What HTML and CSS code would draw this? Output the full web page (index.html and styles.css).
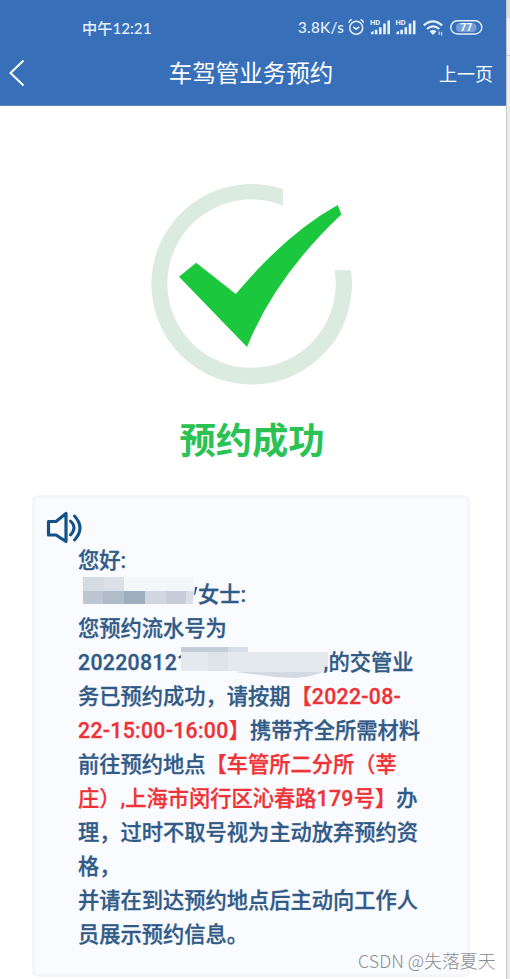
FILE: index.html
```
<!DOCTYPE html>
<html lang="zh-CN">

<head>
  <meta charset="utf-8">
  <meta name="viewport" content="width=device-width, user-scalable=no" />
  <title>车驾管业务预约</title>
  <link rel="stylesheet" href="styles.css">
</head>

<body>
<div class="page">
  <div class="phone">
    <div class="header">
      <div class="status">
        <span class="time">中午12:21</span>
        <span class="speed">3.8K/s</span>
        <svg class="icons" width="138" height="24" viewBox="346 15 138 24" fill="none" stroke="#e6f1ff">
          <!-- alarm -->
          <circle cx="356.2" cy="27.8" r="6.5" stroke-width="1.5" />
          <path d="M348.8 22.8q.8-2.3 3-3.4M363.6 22.8q-.8-2.3-3-3.4M353.2 26.8l3 2.4 3-2.4" stroke-width="1.5" />
          <!-- signal -->
          <g id="signal">
            <path d="M371 34.2v-2.2l2.6-1v3.2zM374.8 34.2v-4.4h2.6v4.4zM379 34.2v-7h2.6v7zM383.2 34.2V23.4h2.6v10.8zM387.4 34.2V20.5h2.6v13.7z" fill="#e6f1ff" stroke="none" />
            <text class="hd" x="370" y="25">HD</text>
          </g>
          <use href="#signal" x="25.5" />
          <!-- wifi -->
          <path d="M423.8 25.4q9-8.2 18.4 0M427 29q6-5.2 12.2 0" stroke-width="2.2" />
          <path d="M429.5 31.3q3.6-2.6 7 0l-3.5 3.6z" fill="#e6f1ff" stroke="none" />
          <path d="M439.2 31.5v3.5M441.6 32v3.5" stroke-width="1" />
          <!-- battery -->
          <rect x="450.8" y="20.8" width="31" height="13.2" rx="6.6" stroke-width="1.4" />
          <path d="M460 23h12.5q4 0 4 4.5t-4 4.5H460q-4 0-4-4.5t4-4.5z" fill="#779fd5" stroke="none" />
          <text class="level" x="466.3" y="31.2">77</text>
        </svg>
      </div>
      <div class="nav">
        <svg class="back" width="16" height="28" viewBox="0 0 16 28" fill="none" stroke="#fff" stroke-width="2">
          <path d="M14.5 1.5L1.5 14l13 12.5" />
        </svg>
        <div class="title">车驾管业务预约</div>
        <div class="prev">上一页</div>
      </div>
    </div>

    <div class="result">
      <svg width="204" height="204" viewBox="150 182 204 204">
        <path fill="#dbebe0" d="M283 189A100.3 100.3 0 1 0 351 270.3H334.7A84.2 84.2 0 1 1 283 205.5z" />
        <path fill="#1bc83d" d="M179 276.8L196.2 262.8L235.8 294Q287 233 337.7 205L341.3 214.5Q275 277 247 347z" />
      </svg>
      <div class="success">预约成功</div>
    </div>

    <div class="notice">
      <svg class="speaker" width="38" height="36" viewBox="0 0 38 36" fill="none" stroke="#155189" stroke-width="3.2">
        <path d="M3.5 11.5H11L21 3.5v28L11 25H3.5z" stroke-linejoin="round" />
        <path d="M25.5 11q7 6.5 0 14M29.5 6q11 12 0 24" stroke-width="3" stroke-linecap="round" />
      </svg>
      <div class="text">
        <div>您好:</div>
        <div class="line"><svg class="mask-name" width="116" height="28" viewBox="78 576 116 28">
          <path fill="#f4f7f9" d="M82 577h111v15H82z" />
          <path fill="#d5dbe3" d="M83 577h21v14H83z" />
          <path fill="#dce1e8" d="M104 577h20v14h-20z" />
          <path fill="#bcc7d3" d="M83 591h20v13H83z" />
          <path fill="#b0bcca" d="M103 591h21v13h-21z" />
          <path fill="#a0afc0" d="M124 591h21v13h-21z" />
          <path fill="#d0d7e0" d="M145 591h21v13h-21z" />
          <path fill="#c6ceda" d="M166 591h20v13h-20z" />
          <path fill="#d9dfe7" d="M186 591h8l-1.5 13H186z" />
        </svg><svg class="slash" width="4" height="12" viewBox="0 0 4 12"><path fill="#315a87" d="M1 0H3.4L1 8H0z" /></svg>女士:</div>
        <div>您预约流水号为</div>
        <div class="line"><b>202208121</b><svg class="mask-no" width="147" height="32" viewBox="181 647 147 32">
          <path fill="#e4e9ed" d="M181 647h67v5h80v15l-6 6-12 3-14 2-20-1-26-4-15-2H181z" />
          <path fill="#c4cdd7" d="M181 647h47v5h-47z" />
          <path fill="#d8dee5" d="M228 647h20v5h-20z" />
          <path fill="#dfe4e9" d="M208 652h20v19h-20z" />
          <path fill="#d3dae2" d="M236 672h86l-12 4-14 2-20-1z" />
        </svg><span class="comma">,</span>的交管业</div>
        <div>务已预约成功，请按期<span class="red">【<b>2022-08-</b></span></div>
        <div><span class="red"><b>22-15:00-16:00</b>】</span>携带齐全所需材料</div>
        <div>前往预约地点<span class="red">【车管所二分所（莘</span></div>
        <div><span class="red">庄）,上海市闵行区沁春路<b>179</b>号】</span>办</div>
        <div>理，过时不取号视为主动放弃预约资</div>
        <div>格，</div>
        <div>并请在到达预约地点后主动向工作人</div>
        <div>员展示预约信息。</div>
      </div>
    </div>
  </div>
  <div class="edge"></div>
</div>
<div class="watermark">CSDN @失落夏天</div>
</body>
</html>
```
FILE: styles.css
```
html, body {
  height: 100%;
}

body {
  margin: 0px;
  background-color: #fff;
  font-family: Roboto, "Noto Sans CJK SC", sans-serif;
  overflow: hidden;
}

.page {
  display: flex;
  height: 979px;
}

.phone {
  width: 506px;
  flex: none;
}

/* strip of the window behind the phone */
.edge {
  flex: 1;
  box-sizing: border-box;
  border-left: 1px solid #c9c9c9;
  background: linear-gradient(#dedfe1 18px, #f1f1f1 18px, #f1f1f1 55px, #c8c8c8 55px, #c8c8c8 56px, #ececec 56px);
}

.header {
  height: 106px;
  box-sizing: border-box;
  background-color: #3770b9;
  border-bottom: 1px solid #5d87bd;
  color: #fff;
}

.status {
  display: flex;
  align-items: center;
  height: 54px;
  padding-left: 82px;
  color: #e6f1ff;
  font-family: Lato, "Noto Sans CJK SC", sans-serif;
  font-size: 15.2px;
  font-weight: 500;
}

.time {
  width: 216px;
}

.speed {
  width: 48px;
  letter-spacing: 0.3px;
}

.hd {
  font: bold 7.5px Roboto, sans-serif;
  fill: #e6f1ff;
  stroke: none;
}

.level {
  font: bold 10.5px Roboto, sans-serif;
  fill: #fff;
  stroke: none;
  text-anchor: middle;
}

.nav {
  display: flex;
  align-items: center;
  height: 37px;
  padding: 0px 13px 0px 9px;
}

.title {
  flex: 1;
  padding-left: 38px;
  padding-bottom: 2px;
  text-align: center;
  font-size: 23.5px;
}

.prev {
  font-size: 18px;
}

.result {
  display: flex;
  flex-direction: column;
  align-items: center;
  height: 389px;
  padding-top: 76px;
  padding-right: 2px;
  box-sizing: border-box;
}

.success {
  margin-top: 29px;
  color: #2ac253;
  font-size: 36.3px;
  line-height: 54px;
  font-weight: bold;
}

.notice {
  width: 438px;
  height: 482px;
  margin-left: 32px;
  padding: 12px 0px 0px 10px;
  box-sizing: border-box;
  border: 3px solid #f4f6fa;
  border-radius: 6px;
  background-color: #fafbfe;
}

.speaker {
  display: block;
  margin-bottom: -2px;
}

.text {
  padding-left: 33px;
  color: #315a87;
  font-size: 21.25px;
  line-height: 34px;
  font-weight: 500;
  white-space: nowrap;
  -webkit-text-stroke: 0.3px;
}

.text > div {
  height: 34px;
}

.text b {
  font-weight: 500;
  letter-spacing: 0.3px;
}

.line {
  display: flex;
}

.mask-name,
.mask-no {
  flex: none;
}

.mask-name {
  margin-top: -2px;
}

.slash {
  flex: none;
  margin-top: 9px;
}

.mask-no {
  margin-top: 1px;
  margin-left: -8px;
}

.comma {
  width: 5px;
  margin-left: -5px;
}

.red {
  color: #ee3338;
}

.watermark {
  position: absolute;
  left: 358px;
  top: 946px;
  color: #8c8d90;
  font-family: "Noto Sans CJK SC", sans-serif;
  font-size: 17.9px;
  font-weight: 300;
  line-height: 28px;
  white-space: nowrap;
}
```
